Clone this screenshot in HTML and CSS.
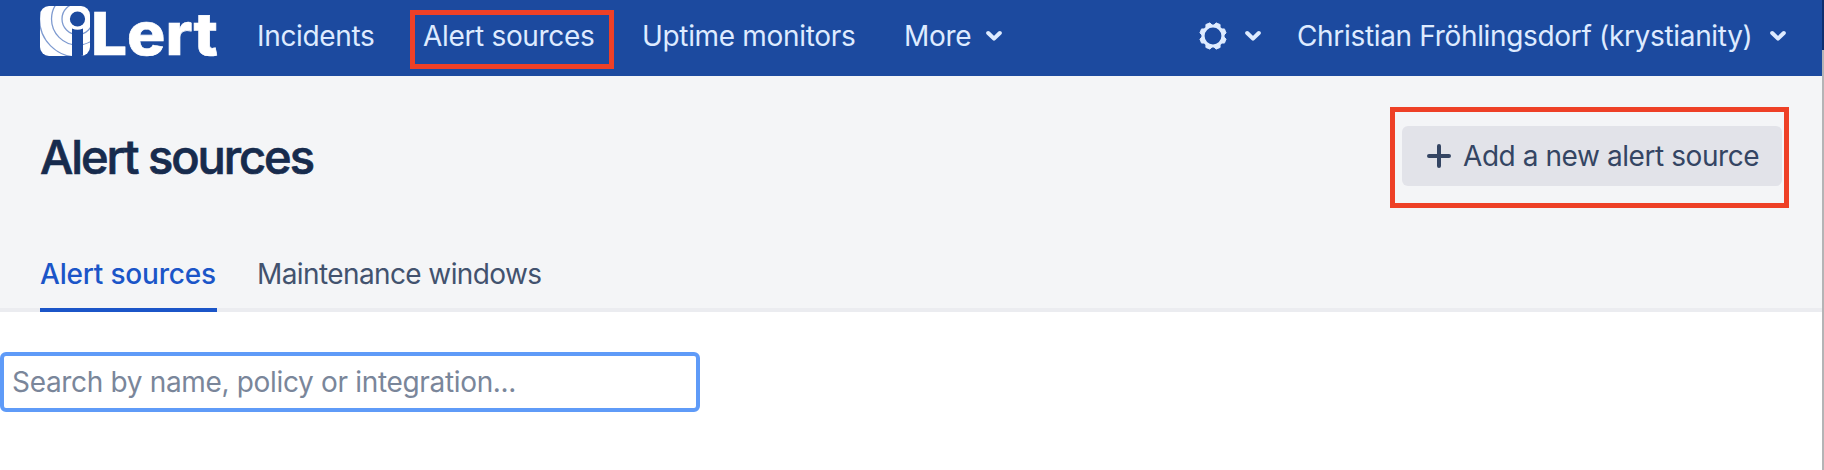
FILE: index.html
```html
<!DOCTYPE html>
<html lang="en">
<head>
<meta charset="utf-8">
<title>Alert sources</title>
<link rel="stylesheet" href="styles.css">
</head>
<body>
<div class="page">
  <header class="topbar">
    <a class="logo">
      <svg width="190" height="64" viewBox="0 0 190 64">
        <defs><clipPath id="badge"><rect width="50" height="50" rx="9"/></clipPath></defs>
        <g clip-path="url(#badge)">
          <rect width="50" height="50" fill="#fff"/>
          <g fill="none" stroke="#7f9bd0" stroke-width="1.3">
            <circle cx="37.500" cy="13" r="15.500"/>
            <circle cx="37.500" cy="13" r="26"/>
            <circle cx="37.500" cy="13" r="38"/>
          </g>
          <circle cx="37.500" cy="13" r="11" fill="#fff"/>
          <circle cx="37.500" cy="13" r="7.600" fill="#1c4a9f"/>
          <path d="M32 22.500q5.500 2.500 11 0V50H32z" fill="#1c4a9f"/>
        </g>
        <text class="wordmark" x="51" y="48.500" textLength="127" lengthAdjust="spacingAndGlyphs">Lert</text>
      </svg>
    </a>
    <nav class="nav">
      <a class="incidents">Incidents</a>
      <a class="sources">Alert sources<i class="mark"></i></a>
      <a class="uptime">Uptime monitors</a>
      <a class="more">More <svg class="chev" width="16" height="12" viewBox="0 0 16 12"><path d="M2.200 3 8 8.600 13.800 3"/></svg></a>
    </nav>
    <div class="account">
      <svg class="gear" width="28" height="28" viewBox="-14 -14 28 28">
        <circle r="10"/>
        <g><path id="tooth" d="M-3.300-10.500-2.200-13.300H2.200L3.300-10.500z" transform="rotate(22.500)"/>
        <use href="#tooth" transform="rotate(45)"/><use href="#tooth" transform="rotate(90)"/><use href="#tooth" transform="rotate(135)"/><use href="#tooth" transform="rotate(180)"/><use href="#tooth" transform="rotate(225)"/><use href="#tooth" transform="rotate(270)"/><use href="#tooth" transform="rotate(315)"/></g>
      </svg>
      <svg class="chev" width="16" height="12" viewBox="0 0 16 12"><path d="M2.200 3 8 8.600 13.800 3"/></svg>
      <span class="user">Christian Fröhlingsdorf (krystianity)</span>
      <svg class="chev" width="16" height="12" viewBox="0 0 16 12"><path d="M2.200 3 8 8.600 13.800 3"/></svg>
    </div>
  </header>
  <section class="head">
    <div class="title-row">
      <h1>Alert sources</h1>
      <div class="add">
        <svg width="24" height="24" viewBox="0 0 24 24"><path d="M12 2v20M2 12h20"/></svg>
        <span>Add a new alert source</span><i class="mark"></i>
      </div>
    </div>
    <div class="tabs">
      <a class="tab active">Alert sources</a>
      <a class="tab maintenance">Maintenance windows</a>
    </div>
  </section>
  <main>
    <input class="search" type="text" placeholder="Search by name, policy or integration...">
  </main>
</div>
<div class="edge"></div>
</body>
</html>
```
FILE: styles.css
```css
* { box-sizing: border-box; }
body {
  margin: 0;
  height: 470px;
  overflow: hidden;
  display: flex;
  background: #fff;
  font: 400 28px/36px Inter, "Liberation Sans", sans-serif;
  letter-spacing: -0.330px;
  white-space: nowrap;
}
.page { width: 1822px; }
.edge { width: 2px; background: linear-gradient(#0d2f70 50px, #b4b4b6 50px); }
.topbar {
  height: 76px;
  padding-left: 40px;
  display: flex;
  align-items: flex-start;
  background: #1c4a9f;
  color: #deebff;
}
.logo { width: 217px; padding-top: 6px; }
.logo svg { display: block; overflow: visible; }
.wordmark { font: 800 59px Inter, sans-serif; letter-spacing: 0; fill: #fff; stroke: #fff; stroke-width: 0.600; }
.nav { display: flex; padding-top: 18px; }
.nav a { position: relative; }
.incidents { width: 166px; }
.sources { width: 219px; }
.uptime { width: 262px; }
.more { display: flex; align-items: center; gap: 15px; }
.mark { position: absolute; border: 5px solid #ee4026; }
.sources .mark { left: -13px; top: -8px; width: 204px; height: 59px; }
.chev { flex: none; fill: none; stroke: #deebff; stroke-width: 4; stroke-linecap: round; stroke-linejoin: round; }
.account { margin-left: auto; padding: 18px 36px 0 0; display: flex; align-items: center; }
.gear { margin-right: 18px; fill: none; stroke: #deebff; stroke-width: 3.200; }
.gear g { fill: #deebff; stroke-width: 0.800; stroke-linejoin: round; }
.user { width: 455px; margin: 0 18px 0 36px; }
.head { height: 236px; display: flex; flex-direction: column; justify-content: space-between; background: #f4f5f7; }
.title-row { display: flex; justify-content: space-between; align-items: flex-start; padding: 50px 40px 0; }
h1 { margin: 0; padding-top: 1px; font-size: 47px; line-height: 60px; font-weight: 500; letter-spacing: -2.050px; color: #172b4d; -webkit-text-stroke: 0.700px #172b4d; }
.add {
  position: relative;
  width: 380px;
  height: 60px;
  padding-left: 25px;
  display: flex;
  align-items: center;
  gap: 12px;
  border-radius: 6px;
  background: #e2e3e9;
  color: #344563;
  letter-spacing: -0.430px;
}
.add svg { stroke: #344563; stroke-width: 4; stroke-linecap: round; }
.add .mark { left: -12px; top: -19px; width: 399px; height: 101px; }
.tabs { height: 56px; padding-left: 40px; display: flex; gap: 40px; border-bottom: 4px solid #ebecf0; color: #42526e; }
.tab { height: 56px; }
.active { width: 177px; border-bottom: 4px solid #1b55c8; color: #1b55c8; font-weight: 500; letter-spacing: -0.200px; }
.maintenance { letter-spacing: -0.600px; }
main { padding-top: 40px; }
.search {
  display: block;
  width: 700px;
  height: 60px;
  padding: 0 8px;
  border: 4px solid #5f9bf8;
  border-radius: 6px;
  outline: 0;
  background: #fff;
  font: inherit;
  letter-spacing: -0.330px;
}
.search::placeholder { color: #7a869a; opacity: 1; }
```
